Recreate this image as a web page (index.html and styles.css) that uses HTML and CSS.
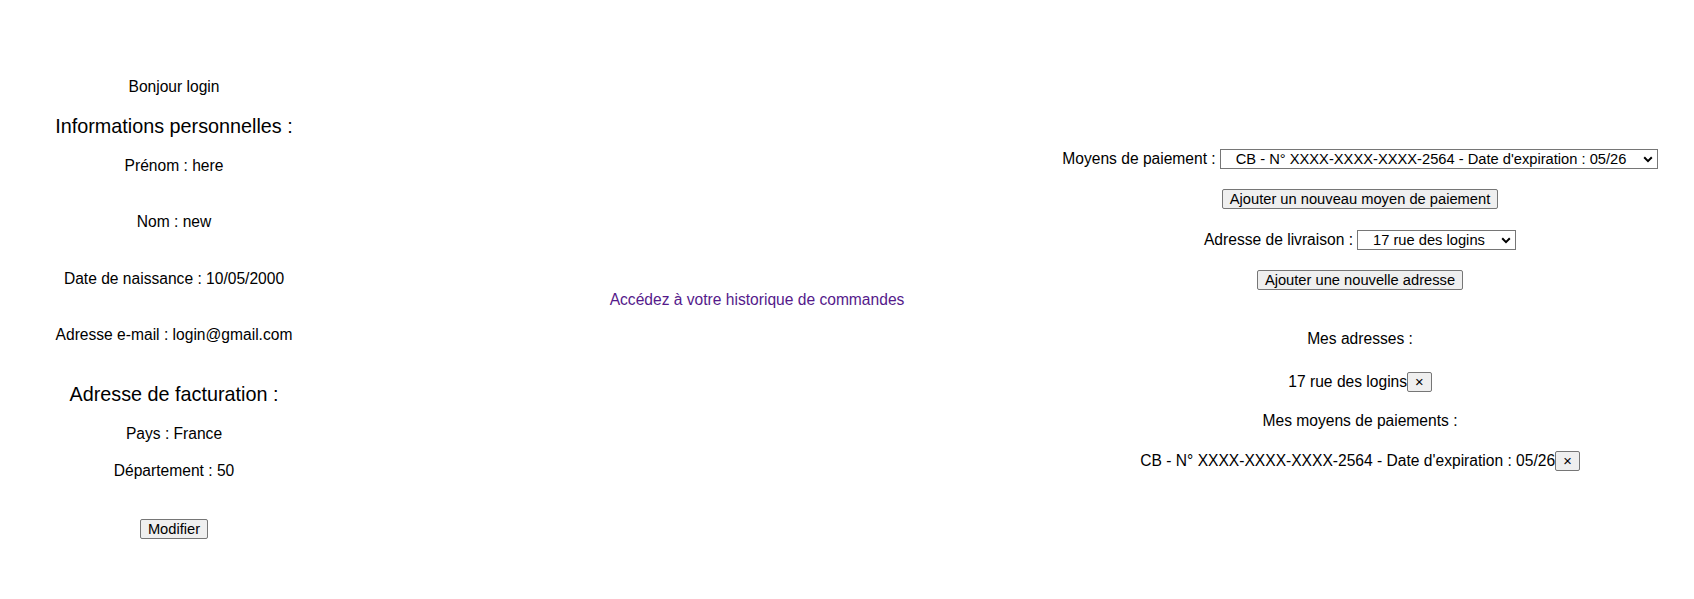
FILE: index.html
```html
<!DOCTYPE html>
<html lang="fr">
<head>
<meta charset="utf-8">
<title>Mon compte</title>
<link rel="stylesheet" href="styles.css">
</head>
<body>
<main class="page">
  <section class="col col-left">
    <p class="text">Bonjour login</p>
    <h3 class="title gap-s">Informations personnelles :</h3>
    <p class="text gap-s">Prénom : here</p>
    <p class="text gap-l">Nom : new</p>
    <p class="text gap-l">Date de naissance : 10/05/2000</p>
    <p class="text gap-l">Adresse e-mail : login@gmail.com</p>
    <h3 class="title gap-l">Adresse de facturation :</h3>
    <p class="text gap-p">Pays : France</p>
    <p class="text gap-s">Département : 50</p>
    <button class="btn gap-l" type="button">Modifier</button>
  </section>

  <section class="col col-mid">
    <a class="history" href="#">Accédez à votre historique de commandes</a>
  </section>

  <section class="col col-right">
    <div class="row">
      <label class="text" for="pay">Moyens de paiement :</label>
      <span class="select-wrap">
        <select id="pay" class="select">
          <option>CB - N° XXXX-XXXX-XXXX-2564 - Date d'expiration : 05/26</option>
        </select>
        <svg class="chevron" width="10" height="7" viewBox="0 0 10 7" aria-hidden="true"><path d="M1.2 1.3 L5 5.1 L8.8 1.3" fill="none" stroke="#000" stroke-width="2"/></svg>
      </span>
    </div>
    <button class="btn r-btn1" type="button">Ajouter un nouveau moyen de paiement</button>
    <div class="row r-row2">
      <label class="text" for="addr">Adresse de livraison :</label>
      <span class="select-wrap">
        <select id="addr" class="select">
          <option>17 rue des logins</option>
        </select>
        <svg class="chevron" width="10" height="7" viewBox="0 0 10 7" aria-hidden="true"><path d="M1.2 1.3 L5 5.1 L8.8 1.3" fill="none" stroke="#000" stroke-width="2"/></svg>
      </span>
    </div>
    <button class="btn r-btn2" type="button">Ajouter une nouvelle adresse</button>
    <p class="text r-mesadr">Mes adresses :</p>
    <div class="item r-item1"><span class="text">17 rue des logins</span><button class="btn x" type="button">×</button></div>
    <p class="text r-mesmoy">Mes moyens de paiements :</p>
    <div class="item r-item2"><span class="text">CB - N° XXXX-XXXX-XXXX-2564 - Date d'expiration : 05/26</span><button class="btn x" type="button">×</button></div>
  </section>
</main>
</body>
</html>
```

FILE: styles.css
```css
body {
  margin: 8px;
  font-family: "Liberation Sans", Arial, sans-serif;
  font-size: 15.6px;
  color: #000;
  background: #fff;
}

.page {
  display: flex;
  align-items: flex-start;
}

.col {
  display: flex;
  flex-direction: column;
  align-items: center;
  text-align: center;
}

.col-left {
  width: 332px;
  margin-top: 70.3px;
}

.col-mid {
  flex: 1;
  padding-left: 140px;
  margin-top: 283.3px;
}

.col-right {
  width: 652px;
  margin-top: 141px;
}

.text {
  margin: 0;
  line-height: 18px;
}

.title {
  margin: 0;
  font-size: 19.8px;
  font-weight: normal;
  line-height: 22px;
}

.gap-s { margin-top: 19.2px; }
.gap-p { margin-top: 20.5px; }
.gap-l { margin-top: 38.5px; }

.btn {
  font-family: "Liberation Sans", Arial, sans-serif;
  font-size: 14.7px;
  line-height: normal;
  color: #000;
  background: #efefef;
  border: 1px solid #767676;
  border-radius: 2px;
  padding: 1px 7px;
  margin-left: 0;
  margin-right: 0;
}

.history {
  color: #551a8b;
  text-decoration: none;
  line-height: 18px;
}

.row {
  display: flex;
  align-items: center;
  gap: 4px;
}

.select-wrap {
  position: relative;
  display: inline-flex;
}

.select {
  appearance: none;
  -webkit-appearance: none;
  height: 20px;
  font-family: "Liberation Sans", Arial, sans-serif;
  font-size: 14.7px;
  color: #000;
  background: #fff;
  border: 1px solid #767676;
  border-radius: 0;
  padding: 0 30px 0 15px;
  margin: 0;
}

.chevron {
  position: absolute;
  right: 5px;
  top: 7px;
  pointer-events: none;
}

.item {
  display: flex;
  align-items: baseline;
}

.x {
  padding: 1px 7px;
}

.r-btn1 { margin-top: 20px; }
.r-row2 { margin-top: 21.4px; }
.r-btn2 { margin-top: 20px; }
.r-mesadr { margin-top: 40px; }
.r-item1 { margin-top: 23.5px; }
.r-mesmoy { margin-top: 19.7px; }
.r-item2 { margin-top: 21.4px; }
```
